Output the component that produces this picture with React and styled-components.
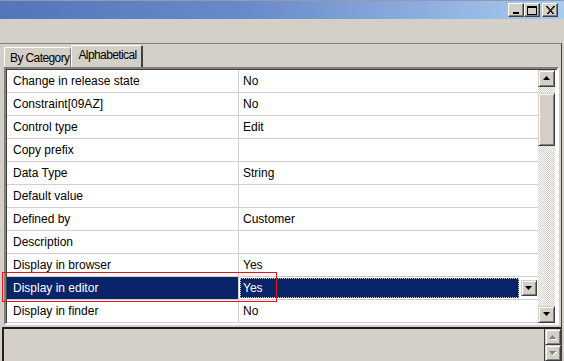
import styled, { createGlobalStyle } from "styled-components";

const GlobalStyle = createGlobalStyle`
  body {
    margin: 0;
    background: #d4d0c8;
    font-family: "Liberation Sans", Arial, sans-serif;
  }
`;

const rows = [
  { name: "Change in release state", value: "No" },
  { name: "Constraint[09AZ]", value: "No" },
  { name: "Control type", value: "Edit" },
  { name: "Copy prefix", value: "" },
  { name: "Data Type", value: "String" },
  { name: "Default value", value: "" },
  { name: "Defined by", value: "Customer" },
  { name: "Description", value: "" },
  { name: "Display in browser", value: "Yes" },
  { name: "Display in editor", value: "Yes", selected: true },
  { name: "Display in finder", value: "No" },
];

function Arrow({ down, disabled }) {
  const pts = down ? "0,0 7,0 3.5,4" : "0,4 7,4 3.5,0";
  return (
    <svg width="8" height="5" viewBox="0 0 8 5">
      {disabled && (
        <polygon points={pts} fill="#fff" transform="translate(1,1)" />
      )}
      <polygon points={pts} fill={disabled ? "#808080" : "#000"} />
    </svg>
  );
}

function App() {
  return (
    <Window>
      <GlobalStyle />
      <TitleBar>
        <CaptionButton>
          <svg width="8" height="8" viewBox="0 0 8 8">
            <rect x="1" y="6" width="6" height="2" fill="#000" />
          </svg>
        </CaptionButton>
        <CaptionButton>
          <svg width="10" height="9" viewBox="0 0 10 9">
            <rect x="0.5" y="0.5" width="9" height="8" fill="none" stroke="#000" />
            <rect x="0" y="0" width="10" height="2" fill="#000" />
          </svg>
        </CaptionButton>
        <CaptionButton $gap>
          <svg width="9" height="8" viewBox="0 0 9 8">
            <path d="M1 0 L8 8 M0 0 L7 8 M8 0 L1 8 M9 0 L2 8" stroke="#000" strokeWidth="1" />
          </svg>
        </CaptionButton>
      </TitleBar>
      <ToolArea />
      <Panel>
        <TabStrip>
          <Tab>By Category</Tab>
          <Tab $active>Alphabetical</Tab>
        </TabStrip>
        <GridFrame>
          <Grid>
            {rows.map((r) => (
              <Row key={r.name}>
                <NameCell $selected={r.selected}>{r.name}</NameCell>
                {r.selected ? (
                  <EditCell>
                    <EditBox>{r.value}</EditBox>
                    <DropButton>
                      <Arrow down />
                    </DropButton>
                  </EditCell>
                ) : (
                  <ValueCell>{r.value}</ValueCell>
                )}
              </Row>
            ))}
          </Grid>
          <ScrollBar>
            <ScrollButton>
              <Arrow />
            </ScrollButton>
            <Track $h={6} />
            <Thumb />
            <Track $grow />
            <ScrollButton>
              <Arrow down />
            </ScrollButton>
          </ScrollBar>
        </GridFrame>
        <BottomPanel>
          <DescArea />
          <SmallScroll>
            <SmallButton>
              <Arrow disabled />
            </SmallButton>
            <SmallButton>
              <Arrow down disabled />
            </SmallButton>
          </SmallScroll>
        </BottomPanel>
      </Panel>
      <Marker />
    </Window>
  );
}

const Window = styled.div`
  position: relative;
  width: 564px;
  height: 361px;
  overflow: hidden;
  background: #d4d0c8;
  display: flex;
  flex-direction: column;
  font-size: 12px;
  color: #000;
`;

const TitleBar = styled.div`
  height: 19px;
  flex: none;
  display: flex;
  justify-content: flex-end;
  align-items: center;
  padding-right: 6px;
  background: linear-gradient(to right, #5475b8 0%, #6a8bca 45%, #a8ccf0 100%);
  border-top: 1px solid #8d9bb6;
  box-sizing: border-box;
`;

const CaptionButton = styled.div`
  width: 16px;
  height: 14px;
  box-sizing: border-box;
  margin-left: ${(p) => (p.$gap ? "2px" : "0")};
  background: #d4d0c8;
  border: 1px solid;
  border-color: #fff #404040 #404040 #fff;
  box-shadow: inset -1px -1px #808080;
  display: flex;
  align-items: center;
  justify-content: center;
`;

const ToolArea = styled.div`
  height: 24px;
  flex: none;
`;

const Panel = styled.div`
  flex: 1;
  display: flex;
  flex-direction: column;
  border-top: 1px solid #808080;
  border-right: 1px solid #404040;
  margin-right: 2px;
  padding-left: 2px;
  min-height: 0;
`;

const TabStrip = styled.div`
  height: 23px;
  flex: none;
  display: flex;
  align-items: flex-end;
  padding-left: 2px;
`;

const Tab = styled.div`
  height: ${(p) => (p.$active ? "22px" : "20px")};
  box-sizing: border-box;
  padding: ${(p) => (p.$active ? "2px 4px 0 6px" : "3px 1px 0 5px")};
  font-size: 12px;
  letter-spacing: -0.6px;
  border-top: 1px solid #fff;
  border-left: 1px solid #fff;
  border-right: ${(p) => (p.$active ? "2px solid #404040" : "1px solid #808080")};
  border-radius: 2px 2px 0 0;
  white-space: nowrap;
`;

const GridFrame = styled.div`
  height: 258px;
  flex: none;
  margin-left: 2px;
  margin-right: 2px;
  box-sizing: border-box;
  border: 2px solid;
  border-color: #808080 #fff #fff #808080;
  box-shadow: inset 1px 1px #404040;
  display: flex;
  background: #fff;
  padding: 1px 2px 0 1px;
`;

const Grid = styled.div`
  flex: 1;
  display: flex;
  flex-direction: column;
  background: #fff;
  overflow: hidden;
`;

const Row = styled.div`
  height: 23px;
  flex: none;
  box-sizing: border-box;
  display: flex;
  border-bottom: 1px solid #d0d0d0;
`;

const NameCell = styled.div`
  width: 232px;
  flex: none;
  box-sizing: border-box;
  padding-left: 6px;
  line-height: 22px;
  border-right: 1px solid #d0d0d0;
  background: ${(p) => (p.$selected ? "#0a246a" : "#fff")};
  color: ${(p) => (p.$selected ? "#fff" : "#000")};
  white-space: nowrap;
`;

const ValueCell = styled.div`
  flex: 1;
  padding-left: 4px;
  line-height: 22px;
`;

const EditCell = styled.div`
  flex: 1;
  display: flex;
  align-items: center;
  padding: 0 1px 0 1px;
  gap: 2px;
`;

const EditBox = styled.div`
  flex: 1;
  height: 20px;
  box-sizing: border-box;
  background: #0a246a;
  color: #fff;
  border: 1px dotted #c8c8c8;
  padding-left: 2px;
  line-height: 18px;
`;

const DropButton = styled.div`
  width: 16px;
  height: 16px;
  box-sizing: border-box;
  background: #d4d0c8;
  border: 1px solid;
  border-color: #d4d0c8 #404040 #404040 #d4d0c8;
  box-shadow: inset 1px 1px #fff, inset -1px -1px #808080;
  display: flex;
  align-items: center;
  justify-content: center;
`;

const ScrollBar = styled.div`
  width: 17px;
  flex: none;
  display: flex;
  flex-direction: column;
`;

const ScrollButton = styled.div`
  height: 17px;
  flex: none;
  box-sizing: border-box;
  background: #d4d0c8;
  border: 1px solid;
  border-color: #d4d0c8 #404040 #404040 #d4d0c8;
  box-shadow: inset 1px 1px #fff, inset -1px -1px #808080;
  display: flex;
  align-items: center;
  justify-content: center;
`;

const Track = styled.div`
  height: ${(p) => (p.$h ? `${p.$h}px` : "auto")};
  flex: ${(p) => (p.$grow ? 1 : "none")};
  background: repeating-conic-gradient(#fff 0 25%, #d4d0c8 0 50%) 0 0 / 2px 2px;
`;

const Thumb = styled.div`
  height: 53px;
  flex: none;
  box-sizing: border-box;
  background: #d4d0c8;
  border: 1px solid;
  border-color: #d4d0c8 #404040 #404040 #d4d0c8;
  box-shadow: inset 1px 1px #fff, inset -1px -1px #808080;
`;

const BottomPanel = styled.div`
  margin-top: 2px;
  flex: 1;
  display: flex;
  border-top: 2px solid #202020;
  border-left: 2px solid #202020;
  min-height: 0;
`;

const DescArea = styled.div`
  flex: 1;
  background: #d4d0c8;
  border-right: 1px solid #404040;
`;

const SmallScroll = styled.div`
  width: 16px;
  display: flex;
  flex-direction: column;
`;

const SmallButton = styled(ScrollButton)`
  height: 16px;
`;

const Marker = styled.div`
  position: absolute;
  left: 2px;
  top: 272px;
  width: 275px;
  height: 30px;
  box-sizing: border-box;
  border: 1px solid #e8141b;
  pointer-events: none;
`;

export default App;
